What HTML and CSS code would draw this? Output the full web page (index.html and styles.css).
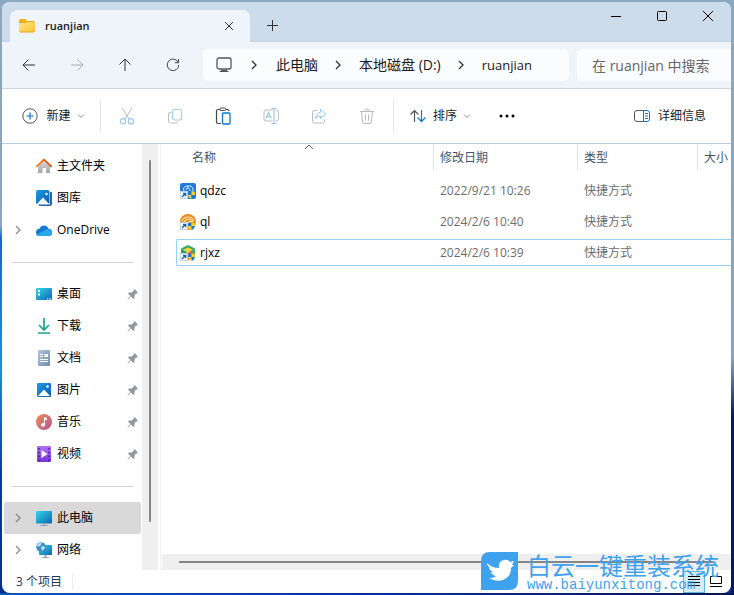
FILE: index.html
```html
<!DOCTYPE html>
<html lang="zh-CN">
<head>
    <meta charset="UTF-8">
    <meta name="viewport" content="width=device-width, initial-scale=1.0">
    <title>ruanjian</title>
    <link rel="stylesheet" href="styles.css">
</head>
<body>
    <svg width="0" height="0" class="defs" aria-hidden="true">
        <defs>
            <linearGradient id="screen" x1="0" y1="0" x2="1" y2="1"><stop offset="0" stop-color="#35d5e8"/><stop offset="1" stop-color="#0b66b5"/></linearGradient>
            <linearGradient id="photo" x1="0" y1="0" x2="1" y2="1"><stop offset="0" stop-color="#1e9be9"/><stop offset="1" stop-color="#0a5db0"/></linearGradient>
            <linearGradient id="folder" x1="0" y1="0" x2="1" y2="1"><stop offset="0" stop-color="#ffe28a"/><stop offset="1" stop-color="#ffc531"/></linearGradient>
            <linearGradient id="house" x1="0" y1="0" x2="0" y2="1"><stop offset="0" stop-color="#ddd"/><stop offset="1" stop-color="#a5a5a5"/></linearGradient>
            <linearGradient id="roof" x1="0" y1="0" x2="1" y2="0"><stop offset="0" stop-color="#f08b1d"/><stop offset="1" stop-color="#d9480f"/></linearGradient>
            <linearGradient id="music" x1="0" y1="0" x2="1" y2="1"><stop offset="0" stop-color="#ef8a4e"/><stop offset="1" stop-color="#b4569a"/></linearGradient>
            <linearGradient id="video" x1="0" y1="0" x2="0" y2="1"><stop offset="0" stop-color="#b173f2"/><stop offset="1" stop-color="#7a32d6"/></linearGradient>
            <linearGradient id="doc" x1="0" y1="0" x2="1" y2="1"><stop offset="0" stop-color="#b4c5d8"/><stop offset="1" stop-color="#6f8cb0"/></linearGradient>
        </defs>
        <symbol id="pin" viewBox="0 0 12 12"><path d="M7.500 1L11 4.500l-1 1H9L7.500 7.500V10l-1 1L4 8.500 1 11.500.500 11 3.500 8 1 5.500l1-1h2.500l2-1.500V2z" fill="#8d99a3"/></symbol>
        <symbol id="chevron" viewBox="0 0 8 10"><path d="M2 1l4 4-4 4" fill="none" stroke="currentColor" stroke-width="1.300"/></symbol>
        <symbol id="down" viewBox="0 0 8 6"><path d="M1 1.500l3 3 3-3" fill="none" stroke="#888"/></symbol>
        <symbol id="shortcut" viewBox="0 0 16 16">
            <rect x=".5" y="8.500" width="7" height="7" fill="#fff" stroke="#c5d3e0"/>
            <path d="M2 14l3.500-3.500M3 10.500h2.700v2.700" fill="none" stroke="#0a5fb8" stroke-width="1.300"/>
            <path d="M8 9.500l3.500-1.500v4H8z" fill="#1c78d4"/><path d="M11.500 8l3.500 1.500V12h-3.500z" fill="#ffd21e"/>
            <path d="M8 12h3.500v4Q8.500 15 8 12z" fill="#ffd21e"/><path d="M11.500 12H15q-.5 3-3.500 4z" fill="#1c78d4"/>
        </symbol>
    </svg>

    <div class="window">
        <header class="titlebar">
            <div class="tab">
                <svg width="16" height="14" viewBox="0 0 16 14"><path d="M0 2Q0 0 2 0h4l2 2h6.500Q16 2 16 4v8H0z" fill="#f2ac0c"/><path d="M0 4h7l1-1h6.500Q16 3 16 4.500V11.500Q16 13 14.500 13h-13Q0 13 0 11.500z" fill="url(#folder)"/><path d="M.5 12.500q.5.500 1 .5h13q.7 0 1-.5" fill="none" stroke="#e8a317"/></svg>
                <span class="tab-title">ruanjian</span>
                <button class="tab-close" aria-label="关闭标签页"><svg width="10" height="10" viewBox="0 0 10 10"><path d="M1 1l8 8M9 1l-8 8" stroke="#333"/></svg></button>
            </div>
            <button class="tab-add" aria-label="新建标签页"><svg width="11" height="11" viewBox="0 0 11 11"><path d="M5.500 0v11M0 5.500h11" stroke="#333"/></svg></button>
            <div class="window-buttons">
                <button aria-label="最小化"><svg width="12" height="12" viewBox="0 0 12 12"><path d="M1 6.500h10" stroke="#000"/></svg></button>
                <button aria-label="最大化"><svg width="12" height="12" viewBox="0 0 12 12"><rect x="1.500" y="1.500" width="9" height="9" rx="1" fill="none" stroke="#000"/></svg></button>
                <button aria-label="关闭"><svg width="12" height="12" viewBox="0 0 12 12"><path d="M1 1l10 10M11 1L1 11" stroke="#000"/></svg></button>
            </div>
        </header>

        <nav class="navbar">
            <div class="nav-buttons">
                <button aria-label="后退"><svg width="14" height="14" viewBox="0 0 14 14"><path d="M13 7H1.500M6.500 1.500L1 7l5.500 5.500" fill="none" stroke="#333"/></svg></button>
                <button aria-label="前进" disabled><svg width="14" height="14" viewBox="0 0 14 14"><path d="M1 7h11.500M7.500 1.500L13 7l-5.500 5.500" fill="none" stroke="#aaa"/></svg></button>
                <button aria-label="上移"><svg width="14" height="14" viewBox="0 0 14 14"><path d="M7 13V1.500M1.500 6.500L7 1l5.500 5.500" fill="none" stroke="#333"/></svg></button>
                <button aria-label="刷新"><svg width="14" height="14" viewBox="0 0 14 14"><path d="M12.300 4.500A5.800 5.800 0 1 0 12.800 7M12.500 1v3.700H8.800" fill="none" stroke="#444"/></svg></button>
            </div>
            <div class="address">
                <svg width="16" height="16" viewBox="0 0 16 16" fill="none" stroke="#555"><rect x="1" y="1" width="14" height="11" rx="2" stroke-width="1.300"/><path d="M5.500 12.500v2M10.500 12.500v2M3.500 14.500h9M6 13.500h4"/></svg>
                <svg class="sep" width="8" height="10"><use href="#chevron"/></svg>
                <a href="#">此电脑</a>
                <svg class="sep" width="8" height="10"><use href="#chevron"/></svg>
                <a href="#">本地磁盘 (D:)</a>
                <svg class="sep" width="8" height="10"><use href="#chevron"/></svg>
                <a class="current" href="#">ruanjian</a>
            </div>
            <input class="search" type="text" placeholder="在 ruanjian 中搜索" aria-label="搜索">
        </nav>

        <div class="toolbar">
            <button class="tool-new">
                <svg width="16" height="16" viewBox="0 0 16 16" fill="none"><circle cx="8" cy="8" r="7.200" stroke="#555"/><path d="M8 4.500v7M4.500 8h7" stroke="#0078d4" stroke-width="1.200"/></svg>
                <span>新建</span>
                <svg width="8" height="6"><use href="#down"/></svg>
            </button>
            <div class="tool-icons">
                <button aria-label="剪切" disabled><svg width="16" height="18" viewBox="0 0 16 18" fill="none"><path d="M3 1l7.500 11.500M13 1L5.500 12.500" stroke="#bbb"/><circle cx="4" cy="14.300" r="2.600" stroke="#99c9ee" stroke-width="1.200"/><circle cx="12" cy="14.300" r="2.600" stroke="#99c9ee" stroke-width="1.200"/></svg></button>
                <button aria-label="复制" disabled><svg width="16" height="16" viewBox="0 0 16 16" fill="none"><rect x="5.500" y="1.500" width="9" height="10.500" rx="2" stroke="#a5cff0" stroke-width="1.200"/><path d="M4 4.500H3q-1.500 0-1.500 2V13q0 2 2 2H9q1.500 0 1.500-1.500" stroke="#bbb"/></svg></button>
                <button aria-label="粘贴"><svg width="16" height="18" viewBox="0 0 16 18" fill="none"><path d="M5 2.500H3Q1.500 2.500 1.500 4v11q0 1.500 1.500 1.500h3M11 2.500h1.500q1.500 0 1.500 1.500" stroke="#444" stroke-width="1.200"/><rect x="4.800" y="1" width="6" height="2.500" rx="1.200" stroke="#444"/><rect x="7.500" y="6" width="7.500" height="11" rx="1" stroke="#0078d4" stroke-width="1.300"/></svg></button>
                <button aria-label="重命名" disabled><svg width="16" height="18" viewBox="0 0 16 18" fill="none"><path d="M9.500 3H3Q1 3 1 5v7q0 2 2 2h6.500M12.500 3H13q2.500 0 2.500 2v7q0 2-2.500 2h-.5" stroke="#bbb"/><path d="M8.500 1.500h5M11 1.500v15M8.500 16.500h5M3 11.500L5.500 5.500 8 11.500M4 9.500h3" stroke="#91c6ee" stroke-width="1.100"/></svg></button>
                <button aria-label="共享" disabled><svg width="16" height="16" viewBox="0 0 16 16" fill="none"><path d="M6 2.500H3.500q-2 0-2 2V13q0 2 2 2h8q2 0 2-2v-1.500" stroke="#bbb"/><path d="M9.500 1.500L15 6l-5.500 4.500V8Q6 8 4.500 10.500 5 5 9.500 4.200z" stroke="#99c9ee" stroke-linejoin="round"/></svg></button>
                <button aria-label="删除" disabled><svg width="16" height="16" viewBox="0 0 16 16" fill="none" stroke="#bbb"><path d="M1 3.500h14M5.500 3.500Q5.500 1 8 1t2.500 2.500M2.500 3.500l1 10.500q.2 1.500 1.500 1.500h6q1.300 0 1.500-1.500l1-10.500M6.500 6.500v6M9.500 6.500v6"/></svg></button>
            </div>
            <div class="tool-right">
                <button class="tool-sort">
                    <svg width="16" height="14" viewBox="0 0 16 14" fill="none" stroke-width="1.200"><path d="M4.500 13V1.500M.5 5.500l4-4 4 4" stroke="#555"/><path d="M11.500 1v11.500M7.500 8.500l4 4 4-4" stroke="#0078d4"/></svg>
                    <span>排序</span>
                    <svg width="8" height="6"><use href="#down"/></svg>
                </button>
                <button aria-label="更多"><svg width="18" height="4" viewBox="0 0 18 4"><circle cx="3" cy="2" r="1.500"/><circle cx="9" cy="2" r="1.500"/><circle cx="15" cy="2" r="1.500"/></svg></button>
                <button class="tool-details">
                    <svg width="16" height="12" viewBox="0 0 16 12" fill="none"><path d="M9.500.5H3Q.5.500.5 3v6q0 2.500 2.500 2.500h6.500" stroke="#555"/><path d="M9.500.5H13Q15.500.5 15.500 3v6q0 2.500-2.500 2.500H9.500zM11 3.500h3M11 6h3M11 8.500h3" stroke="#0078d4"/></svg>
                    <span>详细信息</span>
                </button>
            </div>
        </div>

        <div class="main">
            <aside class="sidebar">
                <div class="side-list">
                    <a class="side-item" href="#"><i></i><svg width="16" height="16" viewBox="0 0 16 16"><path d="M2 7.500L8 2l6 5.500V15h-4v-5H6.500v5H2z" fill="url(#house)"/><path d="M.8 8.300L8 1.500l7.200 6.800" fill="none" stroke="url(#roof)" stroke-width="1.800" stroke-linecap="round"/></svg><span>主文件夹</span></a>
                    <a class="side-item" href="#"><i></i><svg width="16" height="16" viewBox="0 0 16 16"><path d="M14 2h1q1 0 1 1v11q0 2-2 2H4q-1.500 0-1.500-1.500H14z" fill="#1e66ad"/><rect width="13.500" height="14" rx="1.500" fill="url(#photo)"/><path d="M1 14l6-6.500 6 6.500z" fill="#fff"/><circle cx="10.500" cy="4" r="1.200" fill="#fff"/></svg><span>图库</span></a>
                    <a class="side-item" href="#"><svg class="expand" width="8" height="10"><use href="#chevron"/></svg><svg width="16" height="11" viewBox="0 0 16 11"><path d="M0 7.500Q0 4 3.500 3.800 5 .5 8 .5t4.500 3.200Q16 4 16 7.500T12.500 11h-9Q0 11 0 7.500z" fill="#1479d0"/><path d="M1 9.500l9-5q2-1 4 .2 2 1 2 3 0 3.300-3.500 3.300h-9Q2 11 1 9.500z" fill="#28a8ea"/></svg><span>OneDrive</span></a>
                    <hr>
                    <a class="side-item" href="#"><i></i><svg width="16" height="12" viewBox="0 0 16 12"><rect width="16" height="12" rx="1" fill="url(#screen)"/><path d="M2 2h2v2H2zM2 5.500h2v2H2zM11 10.500h1v1h-1zM13 10.500h2v1h-2z" fill="#fff"/></svg><span>桌面</span><svg class="pin" width="12" height="12"><use href="#pin"/></svg></a>
                    <a class="side-item" href="#"><i></i><svg width="16" height="16" viewBox="0 0 16 16" fill="none" stroke="#18a88a" stroke-width="1.700"><path d="M8 0v12M3 7l5 5 5-5M2 15h12"/></svg><span>下载</span><svg class="pin" width="12" height="12"><use href="#pin"/></svg></a>
                    <a class="side-item" href="#"><i></i><svg width="16" height="16" viewBox="0 0 16 16"><rect x="2" width="12" height="16" rx="1" fill="url(#doc)"/><path d="M4 4.500h3M4 6.500h3M4 9.500h8M4 11.500h8" stroke="#fff"/><rect x="8.500" y="4" width="3.500" height="3" fill="#fff"/></svg><span>文档</span><svg class="pin" width="12" height="12"><use href="#pin"/></svg></a>
                    <a class="side-item" href="#"><i></i><svg width="16" height="14" viewBox="0 0 16 14"><rect x="1" width="14" height="14" rx="1" fill="url(#photo)"/><path d="M2 13l6-6.500 6 6.500z" fill="#fff"/><circle cx="11.500" cy="3.500" r="1.300" fill="#fff"/></svg><span>图片</span><svg class="pin" width="12" height="12"><use href="#pin"/></svg></a>
                    <a class="side-item" href="#"><i></i><svg width="16" height="16" viewBox="0 0 16 16"><circle cx="8" cy="8" r="8" fill="url(#music)"/><path d="M8 3l3 1v2L9 5.500v5q0 2.300-2 2.300t-2-2 3-1.800z" fill="#fff"/></svg><span>音乐</span><svg class="pin" width="12" height="12"><use href="#pin"/></svg></a>
                    <a class="side-item" href="#"><i></i><svg width="16" height="16" viewBox="0 0 16 16"><rect x="1" width="14" height="16" rx="1" fill="url(#video)"/><path d="M3 2v13M13 2v13" stroke="#4a158c" stroke-width="1.500" stroke-dasharray="1.500 2.300"/><path d="M5.500 4l6 4-6 4z" fill="#fff"/></svg><span>视频</span><svg class="pin" width="12" height="12"><use href="#pin"/></svg></a>
                    <hr>
                    <a class="side-item selected" href="#"><svg class="expand" width="8" height="10"><use href="#chevron"/></svg><svg width="16" height="15" viewBox="0 0 16 15"><rect width="16" height="12.500" rx=".8" fill="url(#screen)"/><path d="M7 12.500h2V14h3v1H4v-1h3z" fill="#9aa5ad"/></svg><span>此电脑</span></a>
                    <a class="side-item" href="#"><svg class="expand" width="8" height="10"><use href="#chevron"/></svg><svg width="16" height="16" viewBox="0 0 16 16"><rect x="3" y="3" width="13" height="10" rx=".8" fill="url(#screen)"/><path d="M8.500 13h2v2h2.500v1H6v-1h2.500z" fill="#9aa5ad"/><circle cx="5" cy="5" r="4.800" fill="#3c8fc5"/><path d="M1 3q2-3 5-2.500L5 3 3 4.500 1 4zM5 5l3-1 1 2-3 3z" fill="#c3dff0"/></svg><span>网络</span></a>
                </div>
                <div class="scroll-v"><div class="thumb-v"></div></div>
            </aside>

            <section class="content">
                <svg class="sort-mark" width="10" height="6" viewBox="0 0 10 6"><path d="M1 5l4-4 4 4" fill="none" stroke="#666"/></svg>
                <div class="files">
                    <table>
                        <colgroup><col><col class="col-date"><col class="col-type"><col class="col-size"></colgroup>
                        <thead>
                            <tr><th><div class="cell name">名称</div></th><th><div class="cell">修改日期</div></th><th><div class="cell">类型</div></th><th><div class="cell">大小</div></th></tr>
                        </thead>
                        <tbody>
                            <tr>
                                <td><div class="cell name"><svg width="16" height="16" viewBox="0 0 16 16"><rect width="16" height="16" rx="2" fill="#2479d8"/><path d="M4 8q-2-4 3-5 5-1 6 3v4M6 7q0-2 2-2t2 3M8 3v2" fill="none" stroke="#cfeaff"/><use href="#shortcut"/></svg>qdzc</div></td>
                                <td><div class="cell">2022/9/21 10:26</div></td><td><div class="cell">快捷方式</div></td><td><div class="cell"></div></td>
                            </tr>
                            <tr>
                                <td><div class="cell name"><svg width="16" height="16" viewBox="0 0 16 16"><circle cx="8" cy="8" r="8" fill="#ea8a1f"/><path d="M2 7q2-4 6-4t6 4M4 8q2-3 4.500-3T13 8M8 9q1-2 4-1" fill="none" stroke="#ffe2ae" stroke-width="1.200"/><use href="#shortcut"/></svg>ql</div></td>
                                <td><div class="cell">2024/2/6 10:40</div></td><td><div class="cell">快捷方式</div></td><td><div class="cell"></div></td>
                            </tr>
                            <tr class="focused">
                                <td><div class="cell name"><svg width="16" height="16" viewBox="0 0 16 16"><path d="M8 0l7 3.500-7 4-7-4z" fill="#2eae62"/><path d="M8 2.500l4.500 2L8 8 3.500 4.500z" fill="#f5d33c"/><path d="M1 3.500L8 8v7l-7-3z" fill="#28a35f"/><path d="M15 3.500L8 8v7l7-3z" fill="#e8483c"/><path d="M15 3.500L11 6l4 4z" fill="#2eae62"/><use href="#shortcut"/></svg>rjxz</div></td>
                                <td><div class="cell">2024/2/6 10:39</div></td><td><div class="cell">快捷方式</div></td><td><div class="cell"></div></td>
                            </tr>
                        </tbody>
                    </table>
                </div>
                <div class="scroll-h"><div class="thumb-h"></div></div>
            </section>
        </div>

        <footer class="statusbar">
            <span class="count">3 个项目</span>
            <div class="views">
                <button class="active" aria-label="详细信息视图"><svg width="12" height="11" viewBox="0 0 12 11"><path d="M0 .5h12M0 3.500h12M0 6.500h12M0 9.500h12" stroke="#000"/></svg></button>
                <button aria-label="大图标视图"><svg width="12" height="11" viewBox="0 0 12 11"><path d="M.5.500h11v7H.5zM0 10.500h12" fill="none" stroke="#000"/></svg></button>
            </div>
        </footer>
    </div>

    <!-- Водяной знак -->
    <div class="watermark">
        <svg width="37" height="38" viewBox="0 0 37 38"><path d="M9 0h28v29q0 9-9 9H0V9Q0 0 9 0z" fill="#3fa2ef"/><path d="M6 11q5 5 12 5-1-7 5-8 4-1 6 2l4-1-2 4 2 0-3 3q0 9-8 12-8 2-14-2 5 0 7-2-4-1-5-4h2q-4-2-4-5l2 1q-4-2-4-5z" fill="#fff"/></svg>
        <div class="watermark-text">
            <div class="watermark-name">白云一键重装系统</div>
            <div class="watermark-url">www.baiyunxitong.com</div>
        </div>
    </div>
</body>
</html>
```
FILE: styles.css
```css
* {
    box-sizing: border-box;
}

body {
    margin: 0;
    height: 100vh;
    padding: 2px 3px 2px 2px;
    overflow: hidden;
    font-family: "Open Sans", "Noto Sans CJK SC", sans-serif;
    font-size: 12px;
    line-height: 16px;
    color: #1b1b1b;
    background:
        linear-gradient(90deg, #0f55b8, #0a2f9a 50%, #061650) bottom / 100% 2px no-repeat,
        linear-gradient(180deg, #8aa9c0 0%, #86a6bf 60%, #061a5c 70%) right / 3px 100% no-repeat,
        linear-gradient(180deg, #8aa9c0 0%, #86a6bf 38%, #1667cf 40%, #1b8fd0 62%, #0a3a9c 80%, #0a2f8a 100%);
}

.defs {
    position: absolute;
}

button {
    display: flex;
    align-items: center;
    justify-content: center;
    padding: 0;
    border: 0;
    background: none;
    font: inherit;
    color: inherit;
}

a {
    color: inherit;
    text-decoration: none;
}

.window {
    display: flex;
    flex-direction: column;
    height: 100%;
    overflow: hidden;
    border-radius: 8px;
    background: #fff;
}

/* Заголовок с вкладками */
.titlebar {
    display: flex;
    height: 40px;
    padding-left: 8px;
    background: #cddceb;
    border-bottom: 1px solid #c3d3e3;
}

.tab {
    display: flex;
    align-items: center;
    width: 240px;
    height: 32px;
    margin-top: 8px;
    padding: 0 16px 0 9px;
    border-radius: 8px 8px 0 0;
    background: #eff4f9;
}

.tab-title {
    margin-left: 10px;
    font-size: 11px;
    font-weight: 600;
}

.tab-close {
    margin-left: auto;
}

.tab-add {
    width: 44px;
    margin-top: 8px;
}

.window-buttons {
    display: flex;
    height: 28px;
    margin-left: auto;
}

.window-buttons button {
    width: 46px;
}

/* Навигация */
.navbar {
    display: flex;
    align-items: center;
    height: 47px;
    background: #eff4f9;
    border-bottom: 1px solid #c9d6e2;
    font-size: 14px;
}

.nav-buttons {
    display: flex;
    width: 201px;
    padding-left: 3px;
}

.nav-buttons button {
    width: 48px;
    height: 32px;
}

.address {
    display: flex;
    align-items: center;
    flex: 1;
    height: 32px;
    padding-left: 13px;
    border-radius: 5px;
    background: #fbfcfe;
    white-space: nowrap;
}

.current {
    font-size: 13px;
}

.sep {
    margin: 0 18px;
    color: #333;
}

.address .sep ~ .sep {
    margin: 0 17px 0 16px;
}

.search {
    width: 154px;
    height: 32px;
    margin-left: 8px;
    padding: 0 0 0 15px;
    border: 0;
    border-radius: 5px 0 0 5px;
    background: #fbfcfe;
    font: inherit;
}

.search::placeholder {
    color: #666;
}

/* Панель инструментов */
.toolbar {
    display: flex;
    align-items: center;
    height: 55px;
    border-bottom: 1px solid #bccbdd;
}

.tool-new {
    width: 99px;
    height: 32px;
    gap: 6px;
    padding-left: 5px;
    border-right: 1px solid #e5e5e5;
}

.tool-new span {
    margin-left: 2px;
}

.tool-icons {
    display: flex;
    padding: 0 2px;
    border-right: 1px solid #e5e5e5;
}

.tool-icons button {
    width: 48px;
    height: 32px;
}

.tool-right {
    display: flex;
    flex: 1;
    gap: 27px;
    padding: 0 25px 0 16px;
}

.tool-sort {
    gap: 6px;
}

.tool-sort span {
    margin-left: 1px;
}

.tool-details {
    gap: 8px;
    margin-left: auto;
}

/* Боковая панель */
.main {
    display: flex;
    flex: 1;
    min-height: 0;
}

.sidebar {
    display: flex;
    width: 159px;
    padding-right: 2px;
    border-right: 1px solid #f2f2f2;
}

.side-list {
    flex: 1;
    padding: 6px 1px 0 2px;
    color: #000;
}

.side-item {
    display: flex;
    align-items: center;
    height: 32px;
    padding-left: 10px;
    border-radius: 2px;
}

.side-item i {
    width: 8px;
}

.side-item span {
    margin-left: 5px;
}

.side-item svg:not(.pin):not(.expand) {
    margin-left: 14px;
}

.expand {
    color: #888;
}

.pin {
    margin: 0 2px 0 auto;
}

.selected {
    background: #d9d9d9;
}

.side-list hr {
    height: 1px;
    margin: 16px 8px 15px 8px;
    border: 0;
    background: #d2d2d2;
}

.scroll-v {
    width: 16px;
    padding: 16px 7px 48px;
    background: #efefef;
}

.thumb-v {
    height: 100%;
    border-radius: 1px;
    background: #858585;
}

/* Список файлов */
.content {
    position: relative;
    display: flex;
    flex-direction: column;
    flex: 1;
    min-width: 0;
    padding-left: 1px;
}

.sort-mark {
    position: absolute;
    top: 0;
    left: 143px;
}

.files {
    flex: 1;
    padding-left: 14px;
    overflow: hidden;
}

table {
    width: 100%;
    table-layout: fixed;
    border-collapse: collapse;
    color: #6d6d6d;
}

.col-date {
    width: 144px;
}

.col-type {
    width: 120px;
}

.col-size {
    width: 34px;
}

th,
td {
    padding: 2px 0;
    text-align: left;
    font-weight: 400;
}

th {
    padding: 0 0 4px;
    color: #44546f;
}

.cell {
    display: flex;
    align-items: center;
    height: 27px;
    padding-left: 7px;
    white-space: nowrap;
}

th .cell {
    padding-left: 6px;
    border-left: 1px solid #e3e3e3;
}

th .name {
    padding-left: 16px;
    border-left: 0;
}

td .name {
    gap: 4px;
    padding-left: 4px;
    color: #000;
}

.focused .cell {
    border: solid #99d1f5;
    border-width: 1px 0;
}

.focused .name {
    padding-left: 3px;
    border-left-width: 1px;
    border-radius: 2px 0 0 2px;
}

.scroll-h {
    height: 16px;
    padding: 7px 17px;
    background: #efefef;
}

.thumb-h {
    height: 2px;
    background: #858585;
}

/* Строка состояния */
.statusbar {
    display: flex;
    align-items: center;
    height: 23px;
    padding: 0 4px 0 14px;
    color: #1f3757;
}

.count {
    padding-right: 10px;
    border-right: 1px solid #eee;
}

.views {
    display: flex;
    margin-left: auto;
}

.views button {
    width: 22px;
    height: 22px;
}

.views .active {
    border: 1px solid #5bb5e0;
    background: #d5ecf8;
}

.watermark {
    position: absolute;
    right: 11px;
    bottom: 3px;
    display: flex;
    gap: 9px;
    color: #3fa2ef;
}

.watermark-text {
    width: 196px;
}

.watermark-name {
    font-family: "Noto Sans CJK SC", sans-serif;
    font-size: 24px;
    line-height: 26px;
}

.watermark-url {
    font-family: "Liberation Mono", monospace;
    font-size: 14px;
    line-height: 14px;
}
```
